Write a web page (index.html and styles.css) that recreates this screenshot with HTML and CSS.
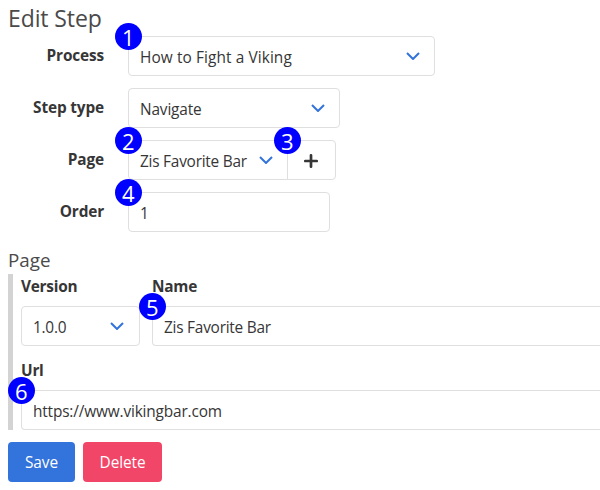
FILE: index.html
```html
<!DOCTYPE html>
<html lang="en">
<head>
<meta charset="utf-8">
<title>Edit Step</title>
<link rel="stylesheet" href="styles.css">
</head>
<body>
<main>
  <h1>Edit Step</h1>
  <div class="row">
    <div class="label">Process</div>
    <div class="control process"><span>How to Fight a Viking</span><svg class="chevron" viewBox="0 0 14 8"><path d="M1 1l6 6 6-6"/></svg><b class="badge">1</b></div>
  </div>
  <div class="row">
    <div class="label">Step type</div>
    <div class="control type"><span>Navigate</span><svg class="chevron" viewBox="0 0 14 8"><path d="M1 1l6 6 6-6"/></svg></div>
  </div>
  <div class="row">
    <div class="label">Page</div>
    <div class="control page"><span>Zis Favorite Bar</span><svg class="chevron" viewBox="0 0 14 8"><path d="M1 1l6 6 6-6"/></svg><b class="badge">2</b></div>
    <div class="control add"><svg class="plus" viewBox="0 0 14 14"><path d="M7 1.3v11.4M1.3 7h11.4"/></svg><b class="badge">3</b></div>
  </div>
  <div class="row">
    <div class="label">Order</div>
    <div class="control order"><span>1</span><b class="badge">4</b></div>
  </div>
  <h2>Page</h2>
  <section class="details">
    <div class="columns">
      <div class="field">
        <div class="caption">Version</div>
        <div class="control version"><span>1.0.0</span><svg class="chevron" viewBox="0 0 14 8"><path d="M1 1l6 6 6-6"/></svg></div>
      </div>
      <div class="field grow">
        <div class="caption">Name</div>
        <div class="control name"><span>Zis Favorite Bar</span><b class="badge">5</b></div>
      </div>
    </div>
    <div class="field url-field">
      <div class="caption">Url</div>
      <div class="control url"><span>https://www.vikingbar.com</span><b class="badge">6</b></div>
    </div>
  </section>
  <div class="actions">
    <div class="button save">Save</div>
    <div class="button delete">Delete</div>
  </div>
</main>
</body>
</html>
```
FILE: styles.css
```css
* { box-sizing: border-box; }
body {
  margin: 0;
  height: 490px;
  overflow: hidden;
  background: #fff;
  color: #363636;
  font: 15.4px/24px "Open Sans", "Noto Sans", sans-serif;
}
main { padding: 4px 0 0 8px; }
h1, h2 { margin: 0; font-weight: 400; color: #4a4a4a; }
h1 { height: 32px; font-size: 23px; line-height: 29px; letter-spacing: -0.1px; }
h2 { height: 30px; font-size: 18.8px; line-height: 32px; }
.row { display: flex; height: 40px; margin-bottom: 12px; }
.label {
  width: 96px;
  margin-right: 24px;
  line-height: 40px;
  text-align: right;
  font-weight: 700;
  letter-spacing: -0.15px;
}
.control {
  position: relative;
  display: flex;
  align-items: center;
  justify-content: space-between;
  height: 40px;
  padding: 3px 15px 0 11px;
  border: 1px solid #dfdfdf;
  border-radius: 4px;
  background: #fff;
  white-space: nowrap;
}
.process { width: 307px; letter-spacing: 0.1px; }
.type { width: 212px; letter-spacing: -0.15px; }
.page { width: 160px; border-radius: 4px 0 0 4px; letter-spacing: -0.23px; }
.add { width: 49px; margin-left: -1px; padding: 2px 2px 0 0; justify-content: center; border-radius: 0 4px 4px 0; }
.order { width: 202px; }
.version { width: 119px; letter-spacing: -0.25px; }
.chevron { width: 14px; height: 8px; margin-top: -3px; fill: none; stroke: #3273dc; stroke-width: 2; }
.process .chevron, .type .chevron, .page .chevron { margin-right: -0.5px; }
.plus { width: 14px; height: 14px; stroke: #363636; stroke-width: 2.7; stroke-linecap: round; }
.badge {
  position: absolute;
  z-index: 1;
  left: -14.5px;
  top: -14.5px;
  width: 27.5px;
  height: 27.5px;
  border-radius: 50%;
  background: #00f;
  color: #fff;
  font-size: 22px;
  font-weight: 400;
  line-height: 29px;
  letter-spacing: 0;
  text-align: center;
}
.details { border-left: 5px solid #d3d3d3; padding-left: 8px; height: 156px; }
.columns { display: flex; gap: 12px; }
.caption { height: 32px; line-height: 25px; font-weight: 700; letter-spacing: -0.25px; }
.grow { flex: 1; }
.name, .url { border-right: 0; border-radius: 4px 0 0 4px; }
.name { letter-spacing: -0.23px; }
.url { letter-spacing: -0.16px; }
.url-field { margin-top: 12px; }
.actions { display: flex; gap: 8px; margin-top: 12px; }
.button { height: 40px; border-radius: 4px; color: #fff; line-height: 41px; text-align: center; letter-spacing: -0.1px; }
.save { width: 67px; background: #3273dc; }
.delete { width: 79px; background: #f14668; }
```
